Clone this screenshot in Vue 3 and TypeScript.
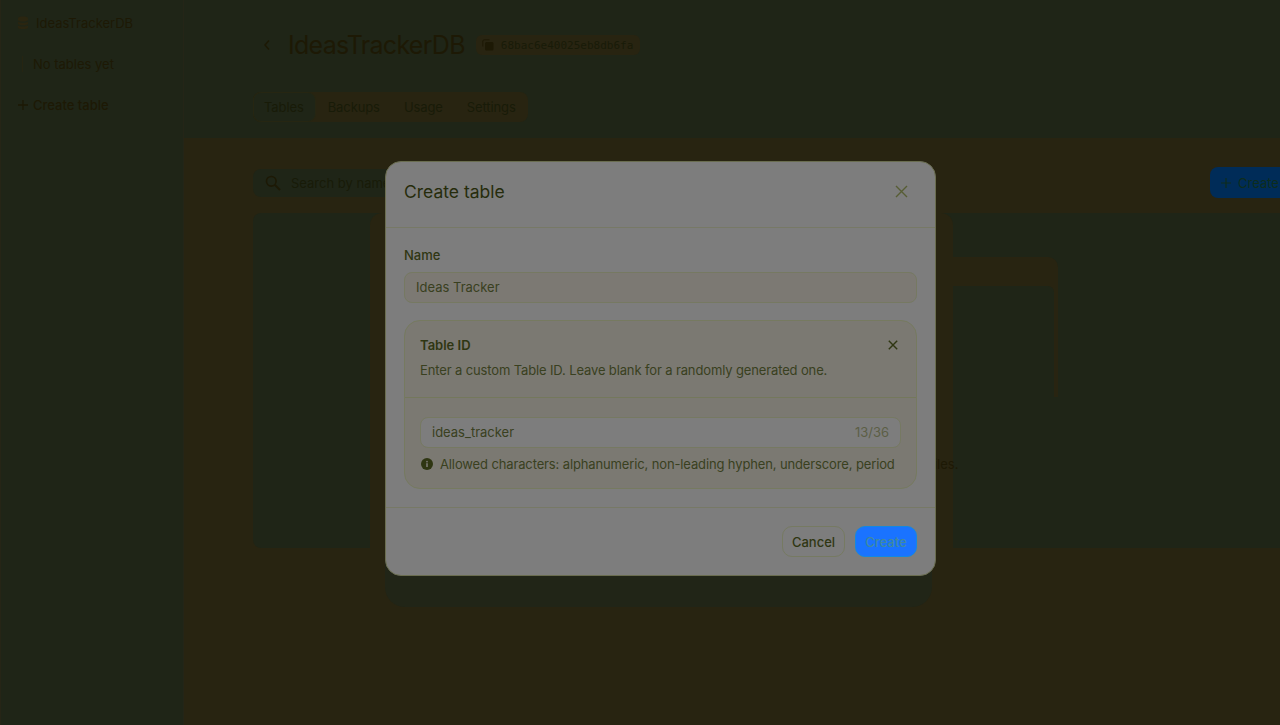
<script setup lang="ts">
const tabs = ['Tables', 'Backups', 'Usage', 'Settings']
const tableId = 'ideas_tracker'
</script>

<template>
  <div class="page">
    <aside class="sidebar">
      <div class="db-row">
        <svg class="db-icon" width="12" height="14" viewBox="0 0 12 14">
          <path d="M1 2.500C1 1.200 3.200.6 6 .6s5 .6 5 1.900V4c0 .9-2.200 1.500-5 1.500S1 4.900 1 4zM1 5.800c1 .8 3 1.100 5 1.100s4-.3 5-1.100v1.900c0 .9-2.200 1.500-5 1.500s-5-.6-5-1.500zM1 9.500c1 .8 3 1.100 5 1.100s4-.3 5-1.100v1.900c0 1-2.200 1.700-5 1.700s-5-.7-5-1.700z" fill="#2a2510" />
        </svg>
        <span>IdeasTrackerDB</span>
      </div>
      <div class="empty-row"><span>No tables yet</span></div>
      <div class="create-row">
        <svg width="12" height="12" viewBox="0 0 12 12">
          <path d="M6 1v10M1 6h10" stroke="#1d1905" stroke-width="1.300" fill="none" />
        </svg>
        <span>Create table</span>
      </div>
    </aside>

    <div class="content">
      <header class="head">
        <div class="title-row">
          <svg class="back" width="8" height="12" viewBox="0 0 8 12">
            <path d="M6 1.500 2 6l4 4.500" stroke="#1d1905" stroke-width="1.500" fill="none" />
          </svg>
          <h1>IdeasTrackerDB</h1>
          <div class="id-chip">
            <svg width="12" height="12" viewBox="0 0 12 12">
              <path d="M.8 7.500V2.200C.8 1.400 1.400.8 2.200.8h5.300" stroke="#1d1905" stroke-width="1" fill="none" />
              <rect x="3" y="3" width="8.500" height="8.500" rx="1.500" fill="#1d1905" />
            </svg>
            <span>68bac6e40025eb8db6fa</span>
          </div>
        </div>
        <nav class="tabs">
          <span v-for="(tab, i) in tabs" :key="tab" class="tab" :class="{ active: i === 0 }">{{ tab }}</span>
        </nav>
      </header>

      <main class="body">
        <div class="toolbar">
          <div class="search">
            <svg width="16" height="16" viewBox="0 0 16 16">
              <circle cx="6.300" cy="6.300" r="4.800" stroke="#1d1905" stroke-width="1.600" fill="none" />
              <path d="m10 10 5 5" stroke="#1d1905" stroke-width="1.800" fill="none" />
            </svg>
            <span>Search by name</span>
          </div>
          <div class="create-btn">
            <svg width="12" height="12" viewBox="0 0 12 12">
              <path d="M6 1v10M1 6h10" stroke="#0e2d1c" stroke-width="1.200" fill="none" />
            </svg>
            <span>Create table</span>
          </div>
        </div>
        <section class="card">
          <div class="illus"><div class="illus-inner"></div></div>
          <p class="card-text">Create your first table to start storing documents in this database and its files.</p>
        </section>
      </main>
    </div>

    <div class="halo"></div>
    <div class="shadow"></div>

    <div class="modal">
      <div class="modal-head">
        <h2>Create table</h2>
        <svg width="13" height="13" viewBox="0 0 13 13">
          <path d="M1 1l11 11M12 1 1 12" stroke="#575d34" stroke-width="1.400" fill="none" />
        </svg>
      </div>
      <div class="modal-body">
        <label class="label">Name</label>
        <div class="input name-input">Ideas Tracker</div>
        <div class="panel">
          <div class="panel-top">
            <div class="panel-title">
              <span>Table ID</span>
              <svg width="10" height="10" viewBox="0 0 10 10">
                <path d="M.8.8l8.400 8.400M9.200.8.8 9.200" stroke="#2f3612" stroke-width="1.400" fill="none" />
              </svg>
            </div>
            <p>Enter a custom Table ID. Leave blank for a randomly generated one.</p>
          </div>
          <div class="panel-bottom">
            <div class="input id-input">
              <span>{{ tableId }}</span>
              <span class="count">{{ tableId.length }}/36</span>
            </div>
            <div class="hint">
              <svg width="12" height="12" viewBox="0 0 12 12">
                <circle cx="6" cy="6" r="6" fill="#2f3612" />
                <rect x="5.200" y="5.200" width="1.600" height="3.800" fill="#7b7972" />
                <rect x="5.200" y="2.900" width="1.600" height="1.500" fill="#7b7972" />
              </svg>
              <span>Allowed characters: alphanumeric, non-leading hyphen, underscore, period</span>
            </div>
          </div>
        </div>
      </div>
      <div class="modal-foot">
        <button class="btn cancel">Cancel</button>
        <button class="btn submit">Create</button>
      </div>
    </div>
  </div>
</template>

<style>
html, body {
  margin: 0;
  background: #1f2517;
}
</style>

<style scoped>
.page {
  position: relative;
  display: flex;
  width: 1280px;
  height: 725px;
  overflow: hidden;
  background: #1f2517;
  font-family: Inter, "Noto Sans", sans-serif;
  font-size: 13px;
  color: #1d1905;
}

.sidebar {
  width: 184px;
  flex: none;
  box-sizing: border-box;
  padding: 15px 0 0 17px;
  border-right: 1px solid #242517;
  box-shadow: inset 1px 0 0 #262516;
}
.db-row {
  display: flex;
  align-items: center;
  gap: 7px;
  height: 16px;
}
.empty-row {
  margin: 25px 0 0 5px;
  height: 16px;
  line-height: 16px;
  padding-left: 10px;
  border-left: 1px solid #262512;
}
.create-row {
  display: flex;
  align-items: center;
  gap: 4px;
  height: 16px;
  margin-top: 25px;
  font-weight: 500;
}

.content {
  flex: 1;
  display: flex;
  flex-direction: column;
  min-width: 0;
}
.head {
  height: 138px;
  flex: none;
  box-sizing: border-box;
  padding: 28px 0 0 69px;
}
.title-row {
  display: flex;
  align-items: center;
  height: 34px;
}
.back {
  margin: 0 0 0 10px;
}
h1 {
  margin: 0 0 0 17px;
  font-size: 25px;
  font-weight: 400;
  letter-spacing: -0.7px;
  line-height: 34px;
  color: #1d1905;
}
.id-chip {
  display: flex;
  align-items: center;
  gap: 7px;
  height: 20px;
  margin-left: 11px;
  padding: 0 7px 0 6px;
  border-radius: 6px;
  background: #282411;
  font-family: "DejaVu Sans Mono", monospace;
  font-size: 11px;
  color: #181b08;
}
.tabs {
  display: flex;
  width: fit-content;
  margin-top: 30px;
  background: #282411;
  border-radius: 8px;
}
.tab {
  height: 30px;
  line-height: 30px;
  padding: 0 12px;
  letter-spacing: -0.1px;
  color: #181b08;
}
.tab.active {
  box-sizing: border-box;
  line-height: 28px;
  padding: 0 11px 0 10px;
  background: #1f2517;
  border: 1px solid #262612;
  border-radius: 8px;
}

.body {
  flex: 1;
  box-sizing: border-box;
  padding: 29px 0 0 69px;
  background: #282411;
}
.toolbar {
  display: flex;
  align-items: flex-start;
  justify-content: space-between;
  width: 1100px;
}
.search {
  display: flex;
  align-items: center;
  gap: 10px;
  box-sizing: border-box;
  width: 260px;
  height: 28px;
  margin-top: 2px;
  padding-left: 12px;
  border-radius: 8px;
  background: #1f2517;
  color: #181b08;
}
.create-btn {
  display: flex;
  align-items: center;
  gap: 6px;
  box-sizing: border-box;
  width: 143px;
  height: 31px;
  padding-left: 10px;
  border-radius: 8px;
  background: #002c58;
  color: #0e2d1c;
}
.card {
  position: relative;
  width: 1100px;
  height: 335px;
  margin-top: 15px;
  border-radius: 8px;
  background: #1f2517;
}
.illus {
  position: absolute;
  top: 44px;
  left: 520px;
  width: 285px;
  height: 140px;
  box-sizing: border-box;
  padding: 29px 4px 0 0;
  border-radius: 10px 10px 0 0;
  background: #282411;
}
.illus-inner {
  height: 111px;
  border-radius: 6px 6px 0 0;
  background: #1f2517;
}
.card-text {
  position: absolute;
  z-index: 1;
  top: 243px;
  left: 0;
  width: 934px;
  margin: 0;
  text-align: center;
  font-size: 13px;
  line-height: 16px;
}

.halo {
  position: absolute;
  left: 370px;
  top: 213px;
  width: 583px;
  height: 335px;
  border-radius: 12px 12px 0 0;
  background: #282411;
}
.shadow {
  position: absolute;
  left: 385px;
  top: 540px;
  width: 547px;
  height: 67px;
  border-radius: 0 0 20px 20px;
  background: #212517;
}

.modal {
  position: absolute;
  z-index: 2;
  left: 385px;
  top: 161px;
  width: 551px;
  height: 415px;
  box-sizing: border-box;
  display: flex;
  flex-direction: column;
  border: 1px solid #6a6d50;
  border-radius: 16px;
  background: #7d7d7d;
  color: #2f3612;
}
.modal-head {
  display: flex;
  align-items: center;
  justify-content: space-between;
  height: 66px;
  flex: none;
  box-sizing: border-box;
  padding: 0 27px 6px 18px;
  border-bottom: 1px solid #777966;
}
h2 {
  margin: 0;
  font-size: 17.500px;
  font-weight: 400;
  color: #262c0c;
}
.modal-body {
  flex: 1;
  box-sizing: border-box;
  padding: 18px 18px 0;
  border-bottom: 1px solid #777966;
}
.label {
  display: block;
  height: 26px;
  line-height: 18px;
  font-weight: 500;
}
.input {
  display: flex;
  align-items: center;
  justify-content: space-between;
  box-sizing: border-box;
  height: 31px;
  padding: 0 11px 1px;
  border-radius: 8px;
  border: 1px solid #767962;
}
.name-input {
  background: #7c7973;
  color: #394020;
}
.panel {
  margin-top: 17px;
  height: 169px;
  box-sizing: border-box;
  border: 1px solid #767a60;
  border-radius: 16px;
  background: #7b7972;
}
.panel-top {
  height: 77px;
  box-sizing: border-box;
  padding: 15px 15px 0;
  border-bottom: 1px solid #74785c;
}
.panel-title {
  display: flex;
  align-items: center;
  justify-content: space-between;
  height: 18px;
  font-weight: 600;
}
.panel-title svg {
  margin-right: 3px;
}
.panel-top p {
  margin: 7px 0 0;
  line-height: 18px;
  letter-spacing: -0.13px;
  color: #394020;
}
.panel-bottom {
  padding: 19px 15px 0;
}
.id-input {
  background: #7d7d7d;
  color: #394020;
}
.count {
  color: #5c5f46;
}
.hint {
  display: flex;
  align-items: center;
  gap: 7px;
  height: 18px;
  margin: 7px 0 0 1px;
  white-space: nowrap;
  letter-spacing: -0.13px;
  color: #394020;
}
.modal-foot {
  display: flex;
  justify-content: flex-end;
  gap: 10px;
  height: 67px;
  flex: none;
  box-sizing: border-box;
  padding: 18px 18px 0 0;
}
.btn {
  height: 31px;
  box-sizing: border-box;
  border-radius: 10px;
  font-family: inherit;
  font-size: 13px;
  font-weight: 500;
  padding: 0;
}
.cancel {
  width: 63px;
  border: 1px solid #767a62;
  background: transparent;
  color: #2f3612;
}
.submit {
  width: 62px;
  border: 1px solid #1488e0;
  background: #1a73ff;
  color: #3f8aa0;
}
</style>
